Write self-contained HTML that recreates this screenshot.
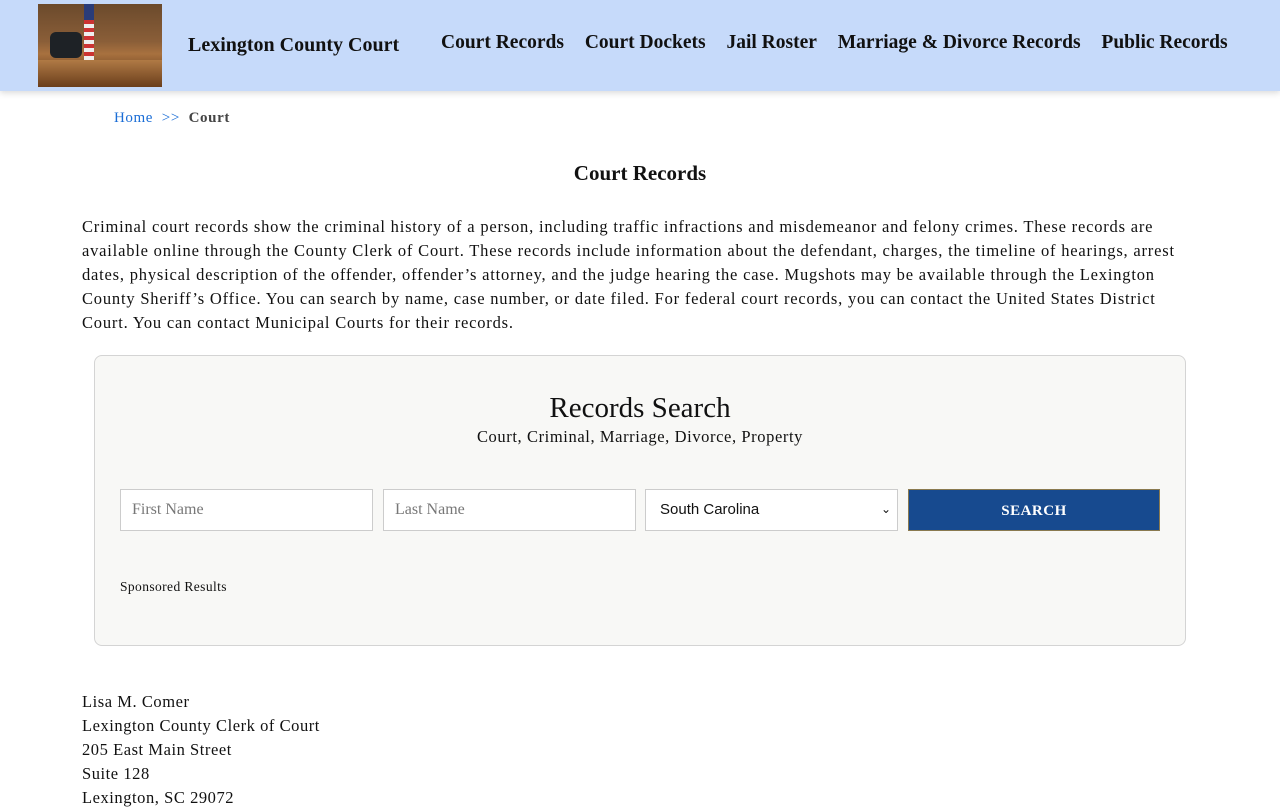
<!DOCTYPE html>
<html><head><meta charset="utf-8"><style>
*{box-sizing:border-box;margin:0;padding:0}
body{width:1280px;height:800px;overflow:hidden;background:#fff;font-family:"Liberation Serif",serif;color:#111}
.hdr{height:91px;background:#c6dafa;box-shadow:0 2px 6px rgba(0,0,0,.15);position:relative}
.logo{position:absolute;left:38px;top:4px;width:124px;height:83px;background:linear-gradient(180deg,#6b4a2c 0%,#8a5e38 45%,#a8713f 60%,#7a4d28 80%,#5a3418 100%);overflow:hidden}
.logo .flag{position:absolute;left:46px;top:0;width:10px;height:58px;background:repeating-linear-gradient(180deg,#c33 0 4px,#eee 4px 8px)}
.logo .flag:before{content:"";position:absolute;left:0;top:0;width:10px;height:16px;background:#2a3c78}
.logo .chair{position:absolute;left:12px;top:28px;width:32px;height:26px;background:#1e2226;border-radius:6px}
.logo .desk{position:absolute;left:0;top:56px;width:124px;height:27px;background:linear-gradient(180deg,#b07a45,#6a3e1c)}
.title{position:absolute;left:188px;top:34px;font-size:20px;font-weight:bold;color:#111}
.nav{position:absolute;left:441px;top:32px;font-size:19.5px;font-weight:bold;color:#111;white-space:nowrap}
.nav span{margin-right:16px}
.bc{position:absolute;left:114px;top:110px;font-size:15px;letter-spacing:.6px}
.bc a{color:#1a6dd6;text-decoration:none}
.bc b{color:#444}
h1{position:absolute;left:0;width:1280px;top:161px;text-align:center;font-size:21px}
.p{position:absolute;left:82px;top:215px;width:1110px;font-size:16.5px;line-height:24px;letter-spacing:.8px}
.box{position:absolute;left:94px;top:355px;width:1092px;height:291px;background:#f8f8f6;border:1px solid #d4d4d4;border-radius:8px}
.box h2{position:absolute;top:36px;width:100%;text-align:center;font-size:29px;font-weight:normal}
.box .sub{position:absolute;top:71px;width:100%;text-align:center;font-size:16.5px;letter-spacing:.6px}
.in{position:absolute;top:133px;width:253px;height:42px;background:#fff;border:1px solid #ccc;font-size:16px;color:#777;padding:11px 11px}
.sel{color:#111;font-family:"Liberation Sans",sans-serif;font-size:15px;padding:11px 14px}
.sel i{position:absolute;right:6px;top:12px;font-style:normal;font-size:12px}
.btn{position:absolute;left:813px;top:133px;width:252px;height:42px;background:#174a8f;border:1px solid #8a7a50;color:#fff;font-size:15px;font-weight:bold;text-align:center;line-height:42px;letter-spacing:.5px}
.sp{position:absolute;left:25px;top:223px;font-size:13.5px;letter-spacing:.4px}
.addr{position:absolute;left:82px;top:690px;font-size:16.5px;line-height:24px;letter-spacing:.55px}
</style></head><body>
<div class="hdr">
<div class="logo"><div class="chair"></div><div class="flag"></div><div class="desk"></div></div>
<div class="title">Lexington County Court</div>
<div class="nav"><span>Court Records</span> <span>Court Dockets</span> <span>Jail Roster</span> <span>Marriage &amp; Divorce Records</span> <span style="margin:0">Public Records</span></div>
</div>
<div class="bc"><a>Home</a> &nbsp;<a>&gt;&gt;</a>&nbsp; <b>Court</b></div>
<h1>Court Records</h1>
<div class="p">Criminal court records show the criminal history of a person, including traffic infractions and misdemeanor and felony crimes. These records are available online through the County Clerk of Court. These records include information about the defendant, charges, the timeline of hearings, arrest dates, physical description of the offender, offender’s attorney, and the judge hearing the case. Mugshots may be available through the Lexington County Sheriff’s Office. You can search by name, case number, or date filed. For federal court records, you can contact the United States District Court. You can contact Municipal Courts for their records.</div>
<div class="box">
<h2>Records Search</h2>
<div class="sub">Court, Criminal, Marriage, Divorce, Property</div>
<div class="in" style="left:25px">First Name</div>
<div class="in" style="left:288px">Last Name</div>
<div class="in sel" style="left:550px">South Carolina<i>&#x2304;</i></div>
<div class="btn">SEARCH</div>
<div class="sp">Sponsored Results</div>
</div>
<div class="addr">Lisa M. Comer<br>Lexington County Clerk of Court<br>205 East Main Street<br>Suite 128<br>Lexington, SC 29072</div>
</body></html>
